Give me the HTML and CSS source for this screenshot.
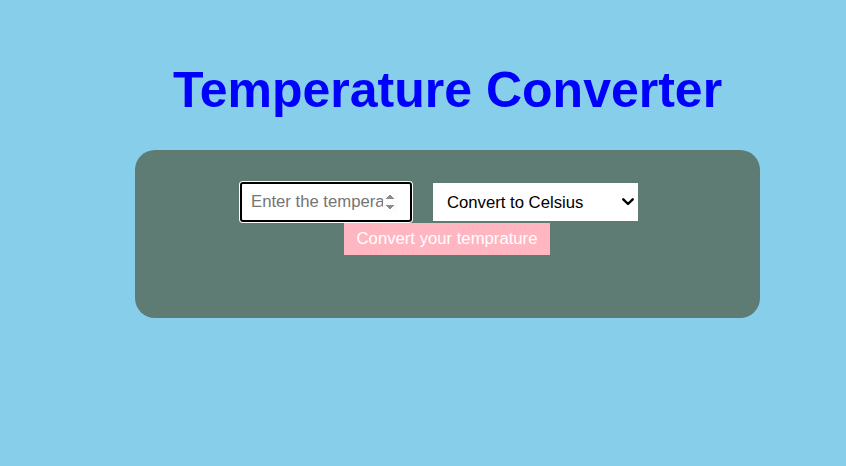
FILE: index.html
```html
<!DOCTYPE html>
<html lang="en">
<head>
<meta charset="utf-8">
<title>Temperature Converter</title>
<link rel="stylesheet" href="styles.css">
</head>
<body>
<main class="wrap">
  <h1 class="title">Temperature Converter</h1>
  <section class="card">
    <div class="row">
      <input class="temp-input" type="number" placeholder="Enter the temperature" autofocus>
      <select class="unit-select">
        <option>Convert to Celsius</option>
        <option>Convert to Fahrenheit</option>
      </select>
    </div>
    <button class="convert-btn" type="button">Convert your temprature</button>
  </section>
</main>
</body>
</html>
```

FILE: styles.css
```css
html, body {
  margin: 0;
  padding: 0;
}
body {
  background: #87ceeb;
  font-family: "Liberation Sans", Arial, sans-serif;
  height: 466px;
  overflow: hidden;
}
.wrap {
  width: 625px;
  margin-left: 135px;
  padding-top: 61px;
}
.title {
  margin: 0;
  text-align: center;
  color: #0000ff;
  font-size: 50px;
  line-height: 58px;
  font-weight: bold;
}
.card {
  margin-top: 31px;
  height: 168px;
  box-sizing: border-box;
  background: #5e7b74;
  border-radius: 20px;
  padding-top: 32px;
  display: flex;
  flex-direction: column;
  align-items: center;
}
.row {
  display: flex;
  align-items: center;
  gap: 21px;
  padding-right: 17px;
}
.temp-input {
  box-sizing: border-box;
  width: 172px;
  height: 40px;
  border: 2px solid #000;
  border-radius: 3px;
  box-shadow: 0 0 0 1px #fff;
  outline: none;
  padding: 0 12px 0 9px;
  font-family: "Liberation Sans", Arial, sans-serif;
  font-size: 16.7px;
  color: #000;
  background: #fff;
}
.temp-input::placeholder {
  color: #757575;
}
.unit-select {
  box-sizing: border-box;
  width: 205px;
  height: 38px;
  border: none;
  border-radius: 0;
  -webkit-appearance: none;
  appearance: none;
  background-color: #fff;
  background-image: url("data:image/svg+xml,%3Csvg xmlns='http://www.w3.org/2000/svg' width='12' height='8' viewBox='0 0 12 8'%3E%3Cpath d='M1.3 1.3 L6 6 L10.7 1.3' fill='none' stroke='%23000' stroke-width='2.4' stroke-linecap='round' stroke-linejoin='round'/%3E%3C/svg%3E");
  background-repeat: no-repeat;
  background-position: right 4px center;
  background-size: 12px 8px;
  padding: 0 20px 0 14px;
  font-family: "Liberation Sans", Arial, sans-serif;
  font-size: 16.7px;
  color: #000;
}
.convert-btn {
  margin-top: 1px;
  margin-left: -1px;
  width: 206px;
  height: 32px;
  border: none;
  background: #ffb6c1;
  color: #fff;
  font-family: "Liberation Sans", Arial, sans-serif;
  font-size: 16.7px;
  padding: 0;
}
```
